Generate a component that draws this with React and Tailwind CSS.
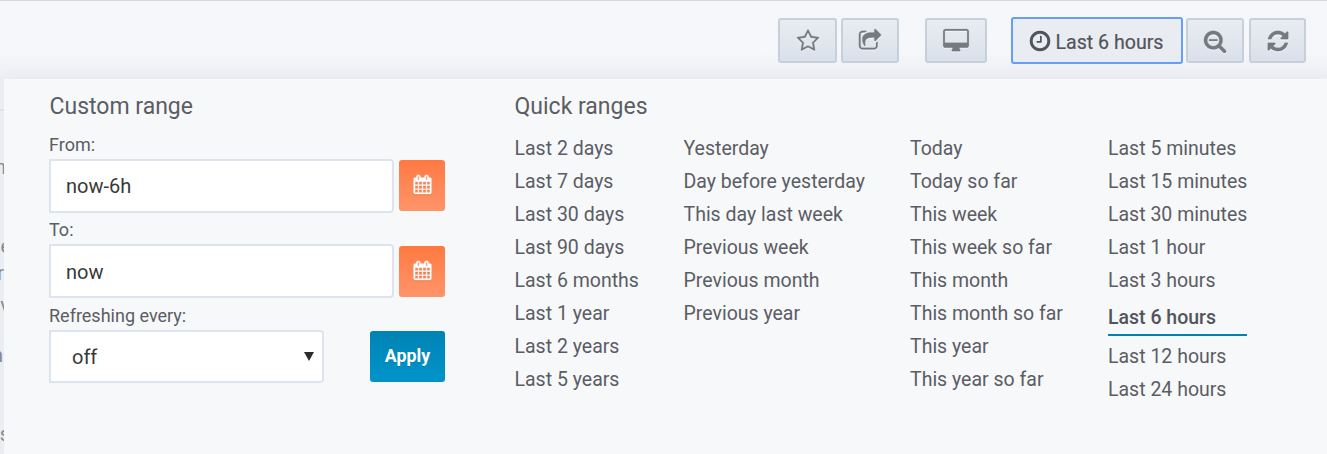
import React from "react";

const PATHS = {
  star: "M1201 1004l306-297-422-62-189-382-189 382-422 62 306 297-73 421 378-199 377 199zm527-357q0 22-26 48l-363 354 86 500q1 7 1 20 0 50-41 50-19 0-40-12l-449-236-449 236q-22 12-40 12-21 0-31.5-14.5t-10.5-35.5q0-6 2-20l86-500-364-354q-25-27-25-48 0-37 56-46l502-73 225-455q19-41 49-41t49 41l225 455 502 73q56 9 56 46z",
  share: "M1472 989v259q0 119-84.5 203.5t-203.5 84.5h-832q-119 0-203.5-84.5t-84.5-203.5v-832q0-119 84.5-203.5t203.5-84.5h255q13 0 22.5 9.5t9.5 22.5q0 27-26 32-77 26-133 60-10 4-16 4h-112q-66 0-113 47t-47 113v832q0 66 47 113t113 47h832q66 0 113-47t47-113v-214q0-19 18-29 28-13 54-37 16-16 35-8 21 9 21 29zm237-496l-384 384q-18 19-45 19-12 0-25-5-39-17-39-59v-192h-160q-323 0-438 131-119 137-74 473 3 23-20 34-8 2-12 2-16 0-26-13-10-14-21-31t-39.5-68.5-49.5-99.5-38.5-114-17.5-122q0-49 3.5-91t14-90 28-88 47-81.5 68.5-74 94.5-61.5 124.5-48.5 159.5-30.5 196.5-11h160v-192q0-42 39-59 13-5 25-5 26 0 45 19l384 384q19 19 19 45t-19 45z",
  desktop: "M1728 992v-832q0-13-9.5-22.5t-22.5-9.5h-1600q-13 0-22.5 9.5t-9.5 22.5v832q0 13 9.5 22.5t22.5 9.5h1600q13 0 22.5-9.5t9.5-22.5zm128-832v1088q0 66-47 113t-113 47h-544q0 37 16 77.5t32 71 16 43.5q0 26-19 45t-45 19h-512q-26 0-45-19t-19-45q0-14 16-44t32-70 16-78h-544q-66 0-113-47t-47-113v-1088q0-66 47-113t113-47h1600q66 0 113 47t47 113z",
  clock: "M1024 544v448q0 14-9 23t-23 9h-320q-14 0-23-9t-9-23v-64q0-14 9-23t23-9h224v-352q0-14 9-23t23-9h64q14 0 23 9t9 23zm416 352q0-148-73-273t-198-198-273-73-273 73-198 198-73 273 73 273 198 198 273 73 273-73 198-198 73-273zm224 0q0 209-103 385.5t-279.5 279.5-385.5 103-385.5-103-279.5-279.5-103-385.5 103-385.5 279.5-279.5 385.5-103 385.5 103 279.5 279.5 103 385.5z",
  zoomOut: "M1088 800v64q0 13-9.5 22.5t-22.5 9.5h-576q-13 0-22.5-9.5t-9.5-22.5v-64q0-13 9.5-22.5t22.5-9.5h576q13 0 22.5 9.5t9.5 22.5zm128 32q0-185-131.5-316.5t-316.5-131.5-316.5 131.5-131.5 316.5 131.5 316.5 316.5 131.5 316.5-131.5 131.5-316.5zm512 832q0 53-37.5 90.5t-90.5 37.5q-54 0-90-38l-343-342q-179 124-399 124-143 0-273.5-55.5t-225-150-150-225-55.5-273.5 55.5-273.5 150-225 225-150 273.5-55.5 273.5 55.5 225 150 150 225 55.5 273.5q0 220-124 399l343 343q37 37 37 90z",
  refresh: "M1639 1056q0 5-1 7-64 268-268 434.5t-478 166.5q-146 0-282.5-55t-243.5-157l-129 129q-19 19-45 19t-45-19-19-45v-448q0-26 19-45t45-19h448q26 0 45 19t19 45-19 45l-137 137q71 66 161 102t187 36q134 0 250-65t186-179q11-17 53-117 8-23 30-23h192q13 0 22.5 9.5t9.5 22.5zm25-800v448q0 26-19 45t-45 19h-448q-26 0-45-19t-19-45 19-45l138-138q-148-137-349-137-134 0-250 65t-186 179q-11 17-53 117-8 23-30 23h-199q-13 0-22.5-9.5t-9.5-22.5v-7q65-268 270-434.5t480-166.5q146 0 284 55.5t245 156.5l130-129q19-19 45-19t45 19 19 45z",
  calendar: "M192 1664h288v-288h-288v288zm352 0h320v-288h-320v288zm-352-352h288v-320h-288v320zm352 0h320v-320h-320v320zm-352-384h288v-288h-288v288zm736 736h320v-288h-320v288zm-384-736h320v-288h-320v288zm768 736h288v-288h-288v288zm-384-352h320v-320h-320v320zm-352-864v-288q0-13-9.5-22.5t-22.5-9.5h-64q-13 0-22.5 9.5t-9.5 22.5v288q0 13 9.5 22.5t22.5 9.5h64q13 0 22.5-9.5t9.5-22.5zm736 864h288v-320h-288v320zm-384-384h320v-288h-320v288zm384 0h288v-288h-288v288zm32-480v-288q0-13-9.5-22.5t-22.5-9.5h-64q-13 0-22.5 9.5t-9.5 22.5v288q0 13 9.5 22.5t22.5 9.5h64q13 0 22.5-9.5t9.5-22.5zm384-64v1280q0 52-38 90t-90 38h-1408q-52 0-90-38t-38-90v-1280q0-52 38-90t90-38h128v-96q0-66 47-113t113-47h64q66 0 113 47t47 113v96h384v-96q0-66 47-113t113-47h64q66 0 113 47t47 113v96h128q52 0 90 38t38 90z",
};

function Icon({ name, className = "size-6" }) {
  return (
    <svg viewBox="0 0 1792 1792" fill="currentColor" className={`shrink-0 overflow-visible ${className}`}>
      <path d={PATHS[name]} />
    </svg>
  );
}

function NavButton({ icon, label, className }) {
  return (
    <button
      aria-label={label}
      className={`flex h-[45px] items-start justify-center rounded-[3px] border-2 border-[#c7d0d9] bg-linear-to-b from-[#e9ecf1] to-[#dae1ec] pt-[8.5px] text-[#767980] ${className}`}
    >
      <Icon name={icon} className="size-6 stroke-current stroke-[14] drop-shadow-[0_1px_0_#ffffffaa]" />
    </button>
  );
}

function DateField({ label, value, rowClass = "", inputClass = "" }) {
  return (
    <div>
      <label className="block h-[28px] text-[18px] leading-[27px] text-[#5b5d64]">{label}</label>
      <div className="flex h-[54px] w-[396px] justify-between">
        <input
          readOnly
          value={value}
          className={`h-[54px] w-[345px] rounded-r-[4px] border-2 border-[#dde4ed] bg-white px-[15px] text-[20px] text-[#383838] outline-none ${inputClass}`}
        />
        <button
          aria-label="Pick date"
          className={`flex h-[51px] w-[46px] items-start justify-center rounded-[3px] bg-linear-to-b from-[#ff7941] to-[#ff9469] pt-[15px] text-white ${rowClass}`}
        >
          <Icon name="calendar" className="size-[19px] stroke-white stroke-[45] drop-shadow-[0_1px_0_#00000022]" />
        </button>
      </div>
    </div>
  );
}

const RANGES = [
  { width: "w-[169px]", items: ["Last 2 days", "Last 7 days", "Last 30 days", "Last 90 days", "Last 6 months", "Last 1 year", "Last 2 years", "Last 5 years"] },
  { width: "w-[226.5px]", items: ["Yesterday", "Day before yesterday", "This day last week", "Previous week", "Previous month", "Previous year"] },
  { width: "w-[198px]", items: ["Today", "Today so far", "This week", "This week so far", "This month", "This month so far", "This year", "This year so far"] },
  { width: "w-[139px]", items: ["Last 5 minutes", "Last 15 minutes", "Last 30 minutes", "Last 1 hour", "Last 3 hours", "Last 6 hours", "Last 12 hours", "Last 24 hours"] },
];

function RangeColumn({ width, items }) {
  return (
    <ul className={`${width} shrink-0 whitespace-nowrap text-[19.5px] leading-[33px]`}>
      {items.map((item) =>
        item === "Last 6 hours" ? (
          <li key={item} className="mb-1 h-[39px] border-b-2 border-[#0083b3] pt-1 font-medium text-[#52545c]">{item}</li>
        ) : (
          <li key={item}>{item}</li>
        )
      )}
    </ul>
  );
}

export default function App() {
  return (
    <div className="flex h-[454px] w-[1327px] flex-col overflow-hidden bg-[#eaedf2] font-[Roboto,sans-serif] text-[#5b5d64]">
      <header className="flex h-[79px] shrink-0 items-start border-t border-[#d3d6dc] bg-linear-to-b from-[#f6f7fa] from-65% to-[#eef0f4] pt-[17px] pl-[778px]">
        <NavButton icon="star" label="Star" className="w-[59px]" />
        <NavButton icon="share" label="Share" className="ml-1 w-[58px]" />
        <NavButton icon="desktop" label="Cycle view" className="ml-[26px] w-[62px]" />
        <button className="-mt-px ml-6 flex h-[47px] w-[172px] items-start rounded-[3px] border-2 border-[#649dfa] bg-[#e9ecf1] pt-[9.5px] pl-[15px] text-[19.6px] leading-[27px] text-[#52545c]">
          <Icon name="clock" />
          <span className="ml-[3.5px] whitespace-nowrap [-webkit-text-stroke:0.2px_#52545c]">Last 6 hours</span>
        </button>
        <NavButton icon="zoomOut" label="Zoom out" className="ml-[3px] w-[58px]" />
        <NavButton icon="refresh" label="Refresh" className="ml-[5px] w-[57px]" />
      </header>

      <div className="flex min-h-0 flex-1">
        <aside className="relative w-1 shrink-0 overflow-hidden bg-[#eaedf2] text-[20px] leading-6 text-[#85888f]">
          <div className="h-8 border-b-2 border-[#dde2ea]" />
          <span className="absolute top-[76px] right-[-2px]">n</span>
          <span className="absolute top-[155px] right-[-7px]">e</span>
          <span className="absolute top-[182px] right-0">r</span>
          <span className="absolute top-[214px] right-[-6px]">v</span>
          <span className="absolute top-[264px] right-[1px]">n</span>
          <span className="absolute top-[343px] right-[-6px]">s</span>
        </aside>

        <main className="flex flex-1 bg-[#f7f8fa] pt-[13px] pl-[45.5px] shadow-[0_0_20px_#c8ccd944]">
          <section className="w-[465px] shrink-0">
            <h3 className="h-[39px] text-[23px] leading-[30px]">Custom range</h3>
            <div className="-ml-[0.5px] flex flex-col">
              <DateField label="From:" value="now-6h" rowClass="mt-px" />
              <div className="h-[3px]" />
              <DateField label="To:" value="now" rowClass="mt-[2px]" inputClass="pt-[2px]" />
              <div className="pt-[4px]">
                <label className="block h-[28px] text-[18px] leading-[27px]">Refreshing every:</label>
                <div className="flex w-[396px] justify-between">
                  <div className="flex h-[53px] w-[275px] items-center justify-between rounded-r-[4px] border-2 border-[#dde4ed] bg-white pr-[8px] pl-[21px] text-[20px] text-[#383838]">
                    <span>off</span>
                    <svg viewBox="0 0 10 9" className="h-[9px] w-[10px] fill-[#2c2c2c]">
                      <path d="M0 0h10L5 9z" />
                    </svg>
                  </div>
                  <button className="mt-px h-[51px] w-[75px] rounded-[3px] bg-linear-to-b from-[#0083b3] to-[#0094cb] pb-px text-[17.8px] font-bold text-white [text-shadow:0_1px_0_#0000001a]">Apply</button>
                </div>
              </div>
            </div>
          </section>
          <section>
            <h3 className="h-10 text-[23px] leading-[30px]">Quick ranges</h3>
            <div className="flex">
              {RANGES.map((column) => (
                <RangeColumn key={column.items[0]} {...column} />
              ))}
            </div>
          </section>
        </main>
      </div>
    </div>
  );
}
